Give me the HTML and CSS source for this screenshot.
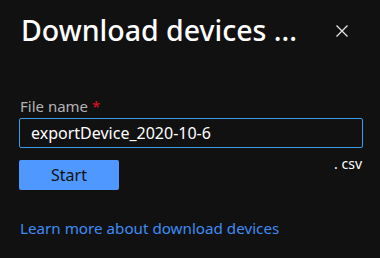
FILE: index.html
```html
<!DOCTYPE html>
<html>
<head>
<meta charset="utf-8">
<link rel="stylesheet" href="styles.css">
</head>
<body>
<div class="panel">
  <div class="header">
    <h1 class="title">Download devices ...</h1>
    <button class="close" aria-label="Close">
      <svg width="12" height="12" viewBox="0 0 12 12"><path d="M0.5 0.5 L11.5 11.5 M11.5 0.5 L0.5 11.5" stroke="#e6e6e6" stroke-width="1.3" fill="none"/></svg>
    </button>
  </div>
  <div class="field">
    <label class="label">File name <span class="req">*</span></label>
    <div class="input">exportDevice_2020-10-6</div>
    <div class="row">
      <button class="start">Start</button>
      <span class="ext">. csv</span>
    </div>
  </div>
  <a class="link" href="#">Learn more about download devices</a>
</div>
</body>
</html>
```
FILE: styles.css
```css
html, body {
  margin: 0;
  padding: 0;
  background: #111111;
  width: 380px;
  height: 258px;
  overflow: hidden;
}
.panel {
  font-family: "Noto Sans", "Open Sans", sans-serif;
  padding: 12px 17px 0 19px;
  color: #ffffff;
}
.header {
  display: flex;
  justify-content: space-between;
  align-items: center;
}
.title {
  margin: 0;
  font-size: 28.5px;
  font-weight: 500;
  line-height: 36px;
  padding-left: 2px;
}
.close {
  background: none;
  border: none;
  padding: 0;
  width: 12px;
  height: 12px;
  margin-right: 15px;
  margin-top: 2px;
  display: flex;
}
.field {
  margin-top: 48px;
}
.label {
  display: block;
  font-size: 15px;
  color: #b3b3b3;
  line-height: 20px;
  padding-left: 1px;
}
.req {
  color: #e81123;
}
.input {
  margin-top: 2px;
  height: 28px;
  border: 1px solid #3b9be8;
  border-radius: 2px;
  box-sizing: content-box;
  padding: 0 11px;
  font-size: 16px;
  line-height: 28px;
  color: #ffffff;
}
.row {
  display: flex;
  justify-content: space-between;
  align-items: flex-start;
  margin-top: 12px;
}
.start {
  width: 100px;
  height: 30px;
  background: #4f98ff;
  border: none;
  border-radius: 2px;
  font-family: inherit;
  font-size: 16px;
  color: #111111;
  padding: 0;
}
.ext {
  font-size: 14px;
  line-height: 14px;
  color: #ffffff;
  margin-top: -3px;
  margin-right: 1px;
}
.link {
  display: block;
  margin-top: 28px;
  font-size: 15.2px;
  color: #3f8cf5;
  text-decoration: none;
  padding-left: 1px;
}
```
